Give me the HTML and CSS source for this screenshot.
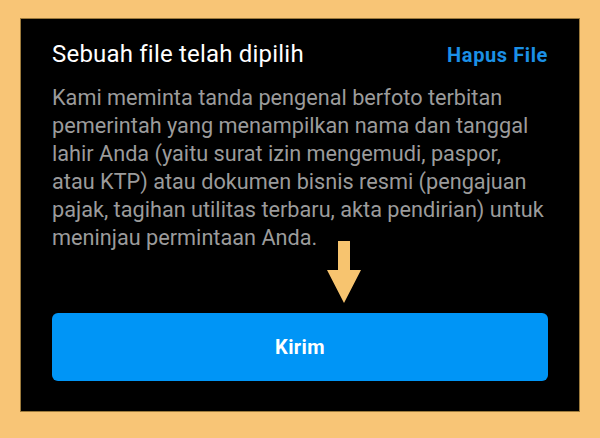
FILE: index.html
```html
<!DOCTYPE html>
<html lang="id">
<head>
<meta charset="utf-8">
<link rel="stylesheet" href="styles.css">
</head>
<body>
<div class="panel">
  <div class="header">
    <span class="title">Sebuah file telah dipilih</span>
    <span class="remove">Hapus File</span>
  </div>
  <p class="desc">Kami meminta tanda pengenal berfoto terbitan pemerintah yang menampilkan nama dan tanggal lahir Anda (yaitu surat izin mengemudi, paspor, atau KTP) atau dokumen bisnis resmi (pengajuan pajak, tagihan utilitas terbaru, akta pendirian) untuk meninjau permintaan Anda.</p>
  <button class="submit">Kirim</button>
  <svg class="arrow" width="34" height="62" viewBox="0 0 34 62"><path d="M11 0H23V29H34L17 62L0 29H11Z" fill="#F7C46F"/></svg>
</div>
</body>
</html>
```
FILE: styles.css
```css
html, body {
  margin: 0;
  padding: 0;
}
body {
  background: #F8C576;
  width: 600px;
  height: 438px;
  overflow: hidden;
  font-family: Roboto, "Liberation Sans", sans-serif;
}
.panel {
  position: relative;
  box-sizing: border-box;
  margin: 18px 20px 0;
  width: 560px;
  height: 394px;
  background: #000;
  border: 1px solid #9c7a3c;
  padding: 21px 31px 30px;
  display: flex;
  flex-direction: column;
}
.header {
  display: flex;
  justify-content: space-between;
  align-items: baseline;
  line-height: 28px;
}
.title {
  color: #fff;
  font-size: 24px;
  letter-spacing: 0.2px;
}
.remove {
  color: #1B90E6;
  font-size: 20px;
  font-weight: 700;
  letter-spacing: 0.6px;
}
.desc {
  margin: 15px 0 0;
  color: #9b9b9b;
  font-size: 21.7px;
  line-height: 28px;
}
.submit {
  margin-top: auto;
  height: 68px;
  border: none;
  border-radius: 6px;
  background: #0095F6;
  color: #fff;
  font-family: inherit;
  font-size: 20px;
  font-weight: 700;
  letter-spacing: 0.4px;
}
.arrow {
  position: absolute;
  left: 306px;
  top: 222px;
}
```
